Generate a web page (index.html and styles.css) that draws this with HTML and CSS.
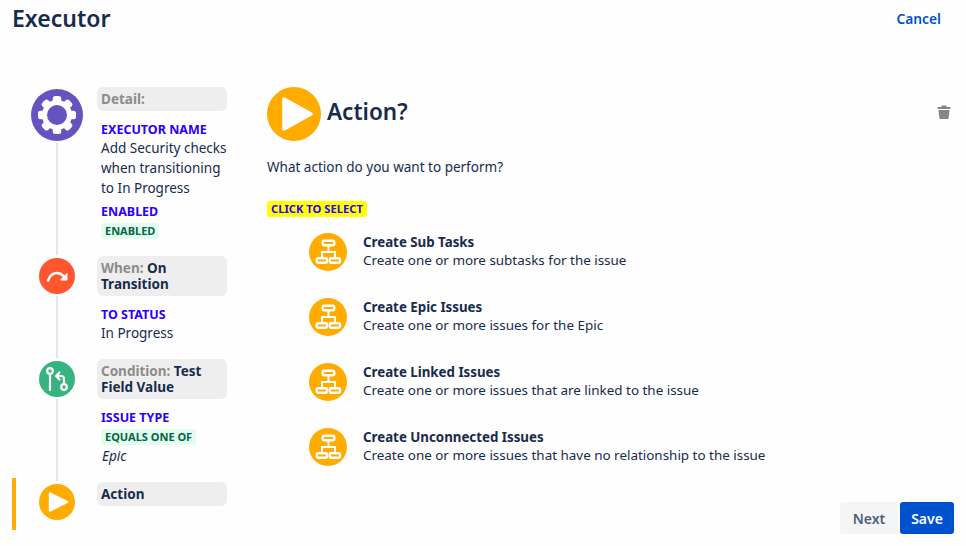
FILE: index.html
```html
<!DOCTYPE html>
<html>
    <head>
        <meta charset="UTF-8">
        <title>Executor</title>
        <link rel="stylesheet" href="styles.css">
    </head>
    <body>
        <svg class="defs" width="0" height="0">
            <symbol id="tree" viewBox="0 0 38 38">
                <path d="M19.500 12v7M13 25v-6h13v6" fill="none" stroke="#fff" stroke-width="2"/>
                <rect x="13.700" y="7.700" width="11.600" height="4.600" rx="1.200" fill="none" stroke="#fff" stroke-width="2.400"/>
                <rect x="7.700" y="25.200" width="10.300" height="4.600" rx="1.200" fill="none" stroke="#fff" stroke-width="2.400"/>
                <rect x="20.700" y="25.200" width="10.300" height="4.600" rx="1.200" fill="none" stroke="#fff" stroke-width="2.400"/>
            </symbol>
        </svg>
        <div class="page">
            <div class="topbar">
                <h1>Executor</h1>
                <a class="cancel">Cancel</a>
            </div>

            <div class="content">
                <div class="steps">
                    <div class="step step1">
                        <div class="rail">
                            <svg class="icon big" viewBox="0 0 52 52">
                                <circle cx="26" cy="26" r="26" fill="#6554c0"/>
                                <g fill="#fff">
                                    <rect x="21.750" y="7" width="8.500" height="38" rx="2.500"/>
                                    <rect x="21.750" y="7" width="8.500" height="38" rx="2.500" transform="rotate(45 26 26)"/>
                                    <rect x="21.750" y="7" width="8.500" height="38" rx="2.500" transform="rotate(90 26 26)"/>
                                    <rect x="21.750" y="7" width="8.500" height="38" rx="2.500" transform="rotate(135 26 26)"/>
                                </g>
                                <circle cx="26" cy="26" r="12.500" fill="none" stroke="#fff" stroke-width="5"/>
                                <circle cx="26" cy="26" r="10" fill="#6554c0"/>
                            </svg>
                            <div class="line"></div>
                        </div>
                        <div class="info">
                            <div class="title"><span class="muted">Detail:</span></div>
                            <div class="label first">EXECUTOR NAME</div>
                            <div class="value">Add Security checks when transitioning to In Progress</div>
                            <div class="label second">ENABLED</div>
                            <span class="lozenge">ENABLED</span>
                        </div>
                    </div>

                    <div class="step step2">
                        <div class="rail">
                            <svg class="icon" viewBox="0 0 36 36">
                                <circle cx="18" cy="18" r="18" fill="#ff5630"/>
                                <path d="M9 22.500C11 17 15 15 18 15c3 0 5 1.500 6.500 3" fill="none" stroke="#fff" stroke-width="2.600" stroke-linecap="round"/>
                                <path d="M28 15.500V22h-6.500z" fill="#fff" stroke="#fff" stroke-linejoin="round"/>
                            </svg>
                            <div class="line"></div>
                        </div>
                        <div class="info">
                            <div class="title"><span class="muted">When:</span> On Transition</div>
                            <div class="label first">TO STATUS</div>
                            <div class="value">In Progress</div>
                        </div>
                    </div>

                    <div class="step step3">
                        <div class="rail">
                            <svg class="icon" viewBox="0 0 36 36">
                                <circle cx="18" cy="18" r="18" fill="#36b37e"/>
                                <g fill="none" stroke="#fff" stroke-width="2.200" stroke-linecap="round" stroke-linejoin="round">
                                    <circle cx="11" cy="10" r="2.800"/>
                                    <path d="M11 13v16"/>
                                    <circle cx="25" cy="26" r="2.800"/>
                                    <path d="M25 23v-5c0-2-1-3-3-3h-4M20.500 11.500 17 15l3.500 3.500"/>
                                </g>
                            </svg>
                            <div class="line"></div>
                        </div>
                        <div class="info">
                            <div class="title"><span class="muted">Condition:</span> Test Field Value</div>
                            <div class="label first">ISSUE TYPE</div>
                            <span class="lozenge wide">EQUALS ONE OF</span>
                            <div class="value epic">Epic</div>
                        </div>
                    </div>

                    <div class="step step4">
                        <div class="rail">
                            <svg class="icon" viewBox="0 0 36 36">
                                <circle cx="18" cy="18" r="18" fill="#ffab00"/>
                                <path d="M11 9.500 28 18l-17 8.500z" fill="#fff" stroke="#fff" stroke-width="2.400" stroke-linejoin="round"/>
                            </svg>
                        </div>
                        <div class="info">
                            <div class="title">Action</div>
                        </div>
                    </div>
                </div>

                <div class="main">
                    <div class="mainhead">
                        <svg class="headicon" viewBox="0 0 54 54">
                            <circle cx="27" cy="27" r="27" fill="#ffab00"/>
                            <path d="M17 12 44 27 17 42z" fill="#fff" stroke="#fff" stroke-width="3.600" stroke-linejoin="round"/>
                        </svg>
                        <h2>Action?</h2>
                        <svg class="trash" viewBox="0 0 14 14">
                            <path d="M5 0.500h4l1 1.500h3.500v2H0.500v-2H4zM1.500 5h11l-1 9h-9z" fill="#858585"/>
                        </svg>
                    </div>
                    <p class="question">What action do you want to perform?</p>
                    <span class="select">CLICK TO SELECT</span>

                    <div class="options">
                        <div class="option">
                            <div class="optionicon"><svg viewBox="0 0 38 38"><use href="#tree"/></svg></div>
                            <div class="optiontext">
                                <div class="optionname">Create Sub Tasks</div>
                                <div class="optiondesc">Create one or more subtasks for the issue</div>
                            </div>
                        </div>
                        <div class="option">
                            <div class="optionicon"><svg viewBox="0 0 38 38"><use href="#tree"/></svg></div>
                            <div class="optiontext">
                                <div class="optionname">Create Epic Issues</div>
                                <div class="optiondesc">Create one or more issues for the Epic</div>
                            </div>
                        </div>
                        <div class="option">
                            <div class="optionicon"><svg viewBox="0 0 38 38"><use href="#tree"/></svg></div>
                            <div class="optiontext">
                                <div class="optionname">Create Linked Issues</div>
                                <div class="optiondesc">Create one or more issues that are linked to the issue</div>
                            </div>
                        </div>
                        <div class="option">
                            <div class="optionicon"><svg viewBox="0 0 38 38"><use href="#tree"/></svg></div>
                            <div class="optiontext">
                                <div class="optionname">Create Unconnected Issues</div>
                                <div class="optiondesc">Create one or more issues that have no relationship to the issue</div>
                            </div>
                        </div>
                    </div>

                    <div class="buttons">
                        <button class="next">Next</button>
                        <button class="save">Save</button>
                    </div>
                </div>
            </div>
        </div>
    </body>
</html>
```

FILE: styles.css
```css
*{
    font-family: "Noto Sans", sans-serif;
    box-sizing: border-box;
}
body{
    margin: 0;
    background-color: #fefefe;
    color: #172b4d;
}
.defs{
    display: block;
    height: 0;
}
.page{
    height: 546px;
    display: flex;
    flex-direction: column;
    overflow: hidden;
}
.topbar{
    display: flex;
    justify-content: space-between;
    height: 87px;
    padding: 3px 25px 0 12px;
}
h1{
    margin: 0;
    font-size: 23px;
    line-height: 30px;
    font-weight: 600;
}
.cancel{
    margin-top: 1px;
    font-size: 13.800px;
    font-weight: 600;
    line-height: 30px;
    color: #0052cc;
}
.content{
    flex: 1;
    display: flex;
}

.steps{
    width: 227px;
    margin-left: 16px;
    flex: none;
}
.step{
    display: flex;
    position: relative;
}
.step1{
    height: 169px;
}
.step2{
    height: 103px;
}
.step3{
    height: 123px;
}
.step4:before{
    content: "";
    position: absolute;
    left: -4px;
    top: -4px;
    width: 4px;
    height: 52px;
    background-color: #ffab00;
}
.rail{
    width: 81px;
    flex: none;
    display: flex;
    flex-direction: column;
    align-items: center;
    padding: 2px 0 0 0;
}
.icon{
    width: 36px;
    height: 36px;
    flex: none;
}
.icon.big{
    width: 52px;
    height: 52px;
}
.line{
    flex: 1;
    width: 2px;
    margin-top: 2px;
    margin-bottom: 1px;
    background-color: #dfe5ea;
}
.info{
    width: 130px;
    flex: none;
}
.title{
    background-color: #eeeeee;
    border-radius: 6px;
    padding: 4px;
    font-size: 13.500px;
    line-height: 16px;
    font-weight: 700;
}
.muted{
    color: #8c8c8c;
}
.label{
    padding-left: 4px;
    font-size: 12.500px;
    line-height: 16px;
    font-weight: 700;
    color: #2b00ff;
}
.label.first{
    margin-top: 11px;
}
.label.second{
    margin-top: 6px;
}
.value{
    padding-left: 4px;
    font-size: 13.500px;
    line-height: 20px;
}
.epic{
    font-style: italic;
    padding-left: 5px;
    margin-top: 1px;
}
.lozenge{
    display: block;
    width: fit-content;
    margin: 3px 0 0 4px;
    padding: 0 4px;
    background-color: #e3fcef;
    border-radius: 3px;
    color: #006644;
    font-size: 11px;
    line-height: 16px;
    font-weight: 700;
}

.main{
    flex: 1;
    margin-left: 24px;
    padding-right: 12px;
    display: flex;
    flex-direction: column;
}
.mainhead{
    display: flex;
    align-items: center;
    height: 54px;
    padding-right: 3px;
}
.headicon{
    width: 54px;
    height: 54px;
    flex: none;
}
h2{
    margin: 0 0 5px 6px;
    font-size: 22.500px;
    font-weight: 600;
    flex: 1;
}
.trash{
    width: 14px;
    height: 14px;
    margin-top: -4px;
}
.question{
    margin: 16px 0 0 0;
    font-size: 13.500px;
    line-height: 20px;
}
.select{
    align-self: flex-start;
    margin-top: 24px;
    padding: 0 4px 1px 4px;
    background-color: #ffff00;
    border-radius: 3px;
    color: #2b00ff;
    font-size: 11.200px;
    line-height: 15px;
    font-weight: 700;
}
.options{
    margin: 16px 0 0 42px;
    display: flex;
    flex-direction: column;
    gap: 27px;
}
.option{
    display: flex;
    align-items: center;
    gap: 16px;
    height: 38px;
}
.optionicon{
    width: 38px;
    height: 38px;
    border-radius: 50%;
    background-color: #ffab00;
    flex: none;
}
.optionicon svg{
    display: block;
    width: 38px;
    height: 38px;
}
.optiontext{
    margin-top: -2px;
}
.optionname{
    font-size: 13.300px;
    line-height: 18px;
    font-weight: 700;
}
.optiondesc{
    font-size: 13.430px;
    line-height: 18px;
}
.buttons{
    margin-top: auto;
    margin-bottom: 12px;
    display: flex;
    justify-content: flex-end;
    gap: 2px;
}
button{
    height: 32px;
    border: none;
    border-radius: 3px;
    font-size: 14px;
    font-weight: 600;
    padding: 0;
}
.next{
    width: 58px;
    background-color: #f4f5f7;
    color: #505f79;
}
.save{
    width: 54px;
    background-color: #0052cc;
    color: #fff;
}
```
